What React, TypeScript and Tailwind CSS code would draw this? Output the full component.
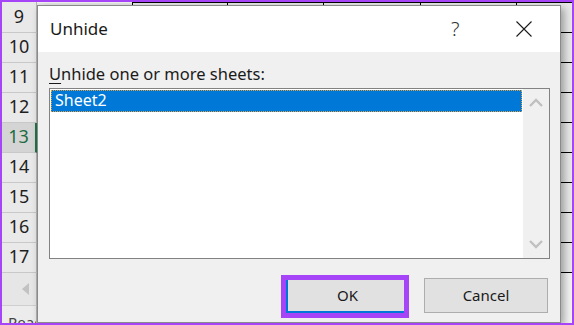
import React from "react";

const font = { fontFamily: '"Segoe UI", "Noto Sans", "Open Sans", sans-serif' };

export default function App() {
  const rows = [9, 10, 11, 12, 13, 14, 15, 16, 17];
  const cols = [95, 95, 96, 97, 96, 96, 60];
  return (
    <div
      className="relative w-[574px] h-[325px] overflow-hidden border-2 border-[#a645f7] bg-[#f3f3f3] box-border"
      style={font}
    >
      <div className="flex h-full">
        {/* row headers */}
        <div className="flex flex-col w-[35px] shrink-0">
          {rows.map((r, i) => (
            <div
              key={r}
              className={`flex items-center justify-center border-b border-[#c8c8c8] border-r text-[18px] ${
                i === 0 ? "h-[31px]" : "h-[30px]"
              } ${
                r === 13
                  ? "bg-[#d4d4d4] text-[#1d6b40] border-r-2 border-r-[#217346]"
                  : "bg-[#e9e9e9] text-[#1f1f1f] border-r-[#b5b5b5]"
              }`}
            >
              <span className="-mt-[2px]">{r}</span>
            </div>
          ))}
          <div className="h-[33px] bg-[#e6e6e6] border-r border-[#b5b5b5] border-b border-b-[#cfcfcf] flex items-center justify-end pr-[6px]">
            <svg width="8" height="12" viewBox="0 0 8 12">
              <path d="M7 0 L0 6 L7 12 Z" fill="#c2c2c2" />
            </svg>
          </div>
          <div className="flex-1 bg-[#ececec] border-r border-[#b5b5b5] overflow-hidden relative">
            <span className="absolute left-[6px] top-[9px] text-[15px] text-[#444] leading-none">Ready</span>
          </div>
        </div>
        {/* grid */}
        <div className="flex-1 flex flex-col">
          <div className="h-[1px] flex">
            <div className="w-[95px]" />
            <div className="flex-1 bg-black" />
          </div>
          {rows.map((r) => (
            <div key={r} className="flex h-[30px]">
              {cols.map((w, j) => (
                <div
                  key={j}
                  style={{ width: w }}
                  className={`shrink-0 bg-[#e8e8e8] ${j === 0 ? "" : "border-b border-l border-black"}`}
                />
              ))}
            </div>
          ))}
        </div>
      </div>

      {/* dialog */}
      <div className="absolute left-[35px] top-[3px] w-[524px] h-[318px] border border-[#8a8a8a] bg-[#f0f0f0] flex flex-col shadow-[3px_3px_8px_rgba(0,0,0,0.35)]">
        <div className="h-[46px] bg-white flex items-center pl-[12px] relative">
          <span className="text-[17px] text-[#1a1a1a] -mt-[1px]">Unhide</span>
          <span className="absolute left-[413px] top-[8px] text-[20px] text-[#333] font-light">?</span>
          <svg className="absolute left-[478px] top-[15px]" width="16" height="16" viewBox="0 0 16 16">
            <path d="M0.5 0.5 L15.5 15.5 M15.5 0.5 L0.5 15.5" stroke="#1a1a1a" strokeWidth="1.1" />
          </svg>
        </div>
        <div className="flex-1 flex flex-col px-[11px]">
          <div className="mt-[11px] h-[21px] text-[16.5px] text-[#1a1a1a] leading-[21px]">
            <span className="underline underline-offset-[3px]">U</span>nhide one or more sheets:
          </div>
          <div className="mt-[4px] h-[171px] w-[501px] border border-[#828282] bg-white flex">
            <div className="flex-1 p-[1px]">
              <div className="h-[22px] bg-[#0078d7] border border-dotted border-[#e0a040] text-white text-[16px] leading-[19px] pl-[3px]">
                Sheet2
              </div>
            </div>
            <div className="w-[26px] bg-[#f0f0f0] flex flex-col items-center justify-between py-[9px]">
              <svg width="14" height="9" viewBox="0 0 14 9">
                <path d="M1 8 L7 2 L13 8" stroke="#c0c0c0" strokeWidth="2.4" fill="none" />
              </svg>
              <svg width="14" height="9" viewBox="0 0 14 9">
                <path d="M1 1 L7 7 L13 1" stroke="#c0c0c0" strokeWidth="2.4" fill="none" />
              </svg>
            </div>
          </div>
          <div className="mt-[19px] flex justify-end gap-[15px] pr-[1px]">
            <button className="relative w-[123px] h-[35px] bg-[#e1e1e1] border-2 border-[#0078d7] text-[15px] text-[#1a1a1a]">
              OK
              <span className="absolute -left-[7px] -top-[5px] w-[128px] h-[43px] border-[5px] border-[#a645f7]" />
            </button>
            <button className="w-[124px] h-[35px] bg-[#e1e1e1] border border-[#adadad] text-[15px] text-[#1a1a1a]">
              Cancel
            </button>
          </div>
        </div>
      </div>
    </div>
  );
}
